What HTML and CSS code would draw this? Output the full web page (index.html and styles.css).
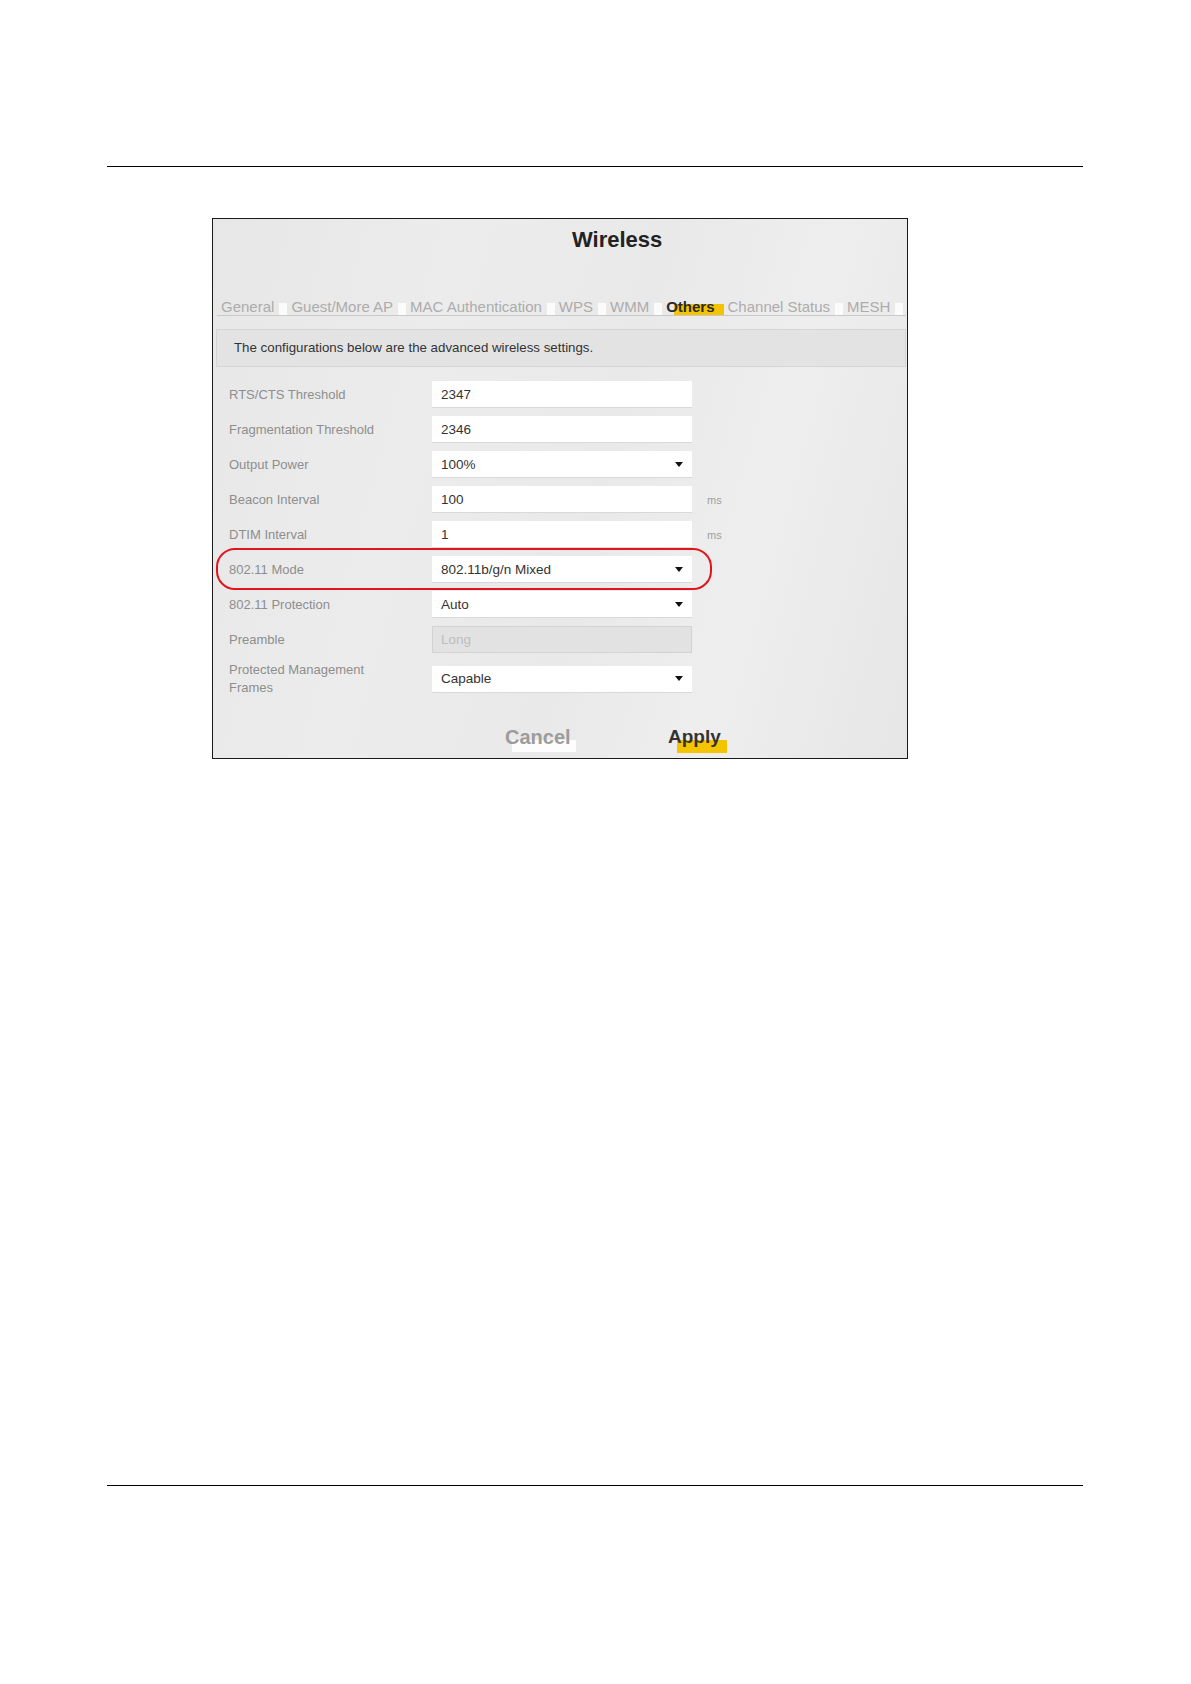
FILE: index.html
```html
<!DOCTYPE html>
<html lang="en">
<head>
<meta charset="utf-8">
<title>Wireless - Others</title>
<link rel="stylesheet" href="styles.css">
</head>
<body>
<div class="page">
  <div class="rule rule-top"></div>

  <div class="shot">
    <h1 class="title">Wireless</h1>

    <ul class="tabs">
      <li class="tab">General</li>
      <li class="tab">Guest/More AP</li>
      <li class="tab">MAC Authentication</li>
      <li class="tab">WPS</li>
      <li class="tab">WMM</li>
      <li class="tab active"><span class="mark">Others</span></li>
      <li class="tab">Channel Status</li>
      <li class="tab">MESH</li>
    </ul>

    <div class="info">The configurations below are the advanced wireless settings.</div>

    <div class="form">
      <div class="row">
        <span class="lbl">RTS/CTS Threshold</span>
        <div class="field">2347</div>
      </div>
      <div class="row">
        <span class="lbl">Fragmentation Threshold</span>
        <div class="field">2346</div>
      </div>
      <div class="row">
        <span class="lbl">Output Power</span>
        <div class="field select"><span>100%</span><i class="caret"></i></div>
      </div>
      <div class="row">
        <span class="lbl">Beacon Interval</span>
        <div class="field">100</div>
        <span class="unit">ms</span>
      </div>
      <div class="row">
        <span class="lbl">DTIM Interval</span>
        <div class="field">1</div>
        <span class="unit">ms</span>
      </div>
      <div class="row highlight">
        <span class="lbl">802.11 Mode</span>
        <div class="field select"><span>802.11b/g/n Mixed</span><i class="caret"></i></div>
      </div>
      <div class="row">
        <span class="lbl">802.11 Protection</span>
        <div class="field select"><span>Auto</span><i class="caret"></i></div>
      </div>
      <div class="row">
        <span class="lbl">Preamble</span>
        <div class="field disabled">Long</div>
      </div>
      <div class="row tall">
        <span class="lbl">Protected Management<br>Frames</span>
        <div class="field select"><span>Capable</span><i class="caret"></i></div>
      </div>
    </div>

    <div class="actions">
      <div class="btn cancel"><span class="mark">Cancel</span></div>
      <div class="btn apply"><span class="mark">Apply</span></div>
    </div>
  </div>

  <div class="rule rule-bottom"></div>
</div>
</body>
</html>
```
FILE: styles.css
```css
html, body {
  margin: 0;
  padding: 0;
  background: #ffffff;
}

body {
  font-family: "Liberation Sans", Arial, sans-serif;
  color: #333;
}

.page {
  width: 1191px;
  height: 1684px;
  overflow: hidden;
}

.rule {
  height: 1px;
  background: #000;
  width: 976px;
  margin-left: 107px;
}

.rule-top {
  margin-top: 166px;
}

.rule-bottom {
  margin-top: 726px;
}

/* screenshot frame */
.shot {
  box-sizing: border-box;
  width: 696px;
  height: 541px;
  margin: 51px 0 0 212px;
  border: 1px solid #1a1a1a;
  background: linear-gradient(105deg, #e7e7e7 0%, #ececec 30%, #e9e9e9 55%, #eeeeee 75%, #e6e6e6 100%);
}

.title {
  margin: 8px 0 0 0;
  padding-left: 359px;
  font-size: 22px;
  line-height: 26px;
  font-weight: bold;
  color: #222;
}

/* tabs */
.tabs {
  list-style: none;
  display: flex;
  margin: 44px 1px 0 4px;
  padding: 0 0 0 4px;
  height: 18px;
  border-bottom: 1px solid #c9c9c9;
}

.tab {
  font-size: 15px;
  line-height: 19px;
  color: #acacac;
  white-space: nowrap;
  display: flex;
  align-items: flex-start;
}

.tab::after {
  content: "";
  display: block;
  width: 8px;
  height: 12px;
  margin: 6px 4px 0 5px;
  background: #fbfbfb;
}

.tab.active::after {
  background: transparent;
  width: 0;
  margin-right: 8px;
}

.tab.active {
  font-weight: bold;
  color: #2b2b2b;
}

.mark {
  position: relative;
  z-index: 0;
}

.tab.active .mark::before {
  content: "";
  position: absolute;
  z-index: -1;
  left: 8px;
  right: -9px;
  top: 7px;
  height: 11px;
  background: #f5c400;
}

/* info bar */
.info {
  box-sizing: border-box;
  height: 38px;
  margin: 13px 1px 0 3px;
  padding-left: 17px;
  border: 1px solid #d5d5d5;
  background: #e3e3e3;
  font-size: 13.3px;
  line-height: 36px;
  color: #333;
}

/* form */
.form {
  margin-top: 14px;
  display: flex;
  flex-direction: column;
  gap: 8px;
}

.row {
  position: relative;
  display: grid;
  grid-template-columns: 203px 260px auto;
  align-items: center;
  padding-left: 16px;
  height: 27px;
}

.row.tall {
  height: 36px;
}

.lbl {
  font-size: 13px;
  line-height: 18px;
  color: #8e8e8e;
}

.field {
  box-sizing: border-box;
  height: 27px;
  padding-left: 9px;
  background: #ffffff;
  border-bottom: 1px solid #d9d9d9;
  font-size: 13.5px;
  line-height: 27px;
  color: #333;
}

.field.select {
  display: flex;
  justify-content: space-between;
  align-items: center;
  padding-right: 9px;
}

.caret {
  display: block;
  width: 0;
  height: 0;
  border-left: 4px solid transparent;
  border-right: 4px solid transparent;
  border-top: 5px solid #111;
}

.field.disabled {
  background: #e2e2e2;
  border: 1px solid #d3d3d3;
  color: #bdbdbd;
  line-height: 25px;
  padding-left: 8px;
}

.unit {
  margin-left: 15px;
  font-size: 11px;
  color: #a0a0a0;
}

.row.highlight::after {
  content: "";
  position: absolute;
  left: 3px;
  top: -8px;
  width: 496px;
  height: 42px;
  box-sizing: border-box;
  border: 2.5px solid #e2141c;
  border-radius: 19px;
}

/* buttons */
.actions {
  display: flex;
  margin-top: 28px;
  padding-left: 292px;
}

.btn {
  font-size: 20px;
  line-height: 24px;
  font-weight: bold;
}

.btn.cancel {
  width: 163px;
  color: #9c9c9c;
}

.btn.apply {
  font-size: 19px;
  color: #333;
}

.btn .mark::before {
  content: "";
  position: absolute;
  z-index: -1;
  top: 14px;
  height: 12px;
}

.btn.cancel .mark::before {
  left: 7px;
  right: -5px;
  background: #fdfdfd;
}

.btn.apply .mark::before {
  left: 9px;
  right: -6px;
  height: 13px;
  background: #f5c400;
}
```
